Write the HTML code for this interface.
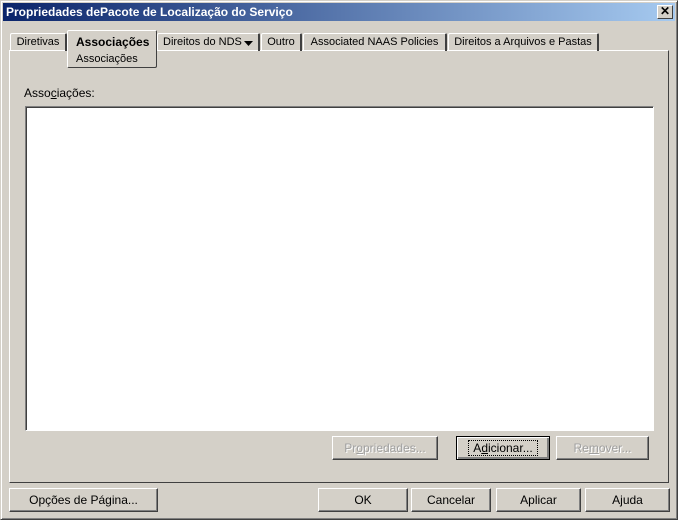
<!DOCTYPE html>
<html><head><style>
*{box-sizing:border-box}
body{margin:0;width:678px;height:520px;background:#d4d0c8;font-family:"Liberation Sans",sans-serif;font-size:11px;color:#000;position:relative;overflow:hidden}
.a{position:absolute;white-space:nowrap}
.win{left:0;top:0;width:678px;height:520px;border:1px solid;border-color:#d4d0c8 #404040 #404040 #d4d0c8;box-shadow:inset 1px 1px #fff,inset -1px -1px #808080}
.title{left:3px;top:3px;width:672px;height:18px;background:linear-gradient(90deg,#0a246a,#a6caf0);color:#fff;font-weight:bold;font-size:12px;line-height:18px;padding-left:3px}
.x{right:5px;top:5px;width:16px;height:14px;background:#d4d0c8;border:1px solid;border-color:#fff #404040 #404040 #fff;color:#000;font-size:12px;line-height:11px;text-align:center;font-weight:bold}
.tab{top:33px;height:18px;border-top:1px solid #fff;border-left:1px solid #fff;border-right:2px solid #404040;line-height:17px;text-align:center;border-radius:2px 2px 0 0}
.panel{left:9px;top:50px;width:660px;height:433px;border:1px solid;border-color:#fff #404040 #404040 #fff}
.list{left:25px;top:106px;width:629px;height:325px;background:#fff;border:1px solid;border-color:#808080 #fff #fff #808080;box-shadow:inset 1px 1px #404040}
.btn{height:24px;border:1px solid;border-color:#fff #404040 #404040 #fff;box-shadow:inset -1px -1px #808080;text-align:center;line-height:22px;font-size:12px}
.dis{color:#a0a0a0;text-shadow:1px 1px #fff}
u{text-decoration:underline}
</style></head><body>
<div class="a win"></div>
<div class="a title">Propriedades dePacote de Localização do Serviço</div>
<div class="a x">✕</div>
<div class="a panel"></div>
<div class="a tab" style="left:10px;width:57px">Diretivas</div>
<div class="a tab" style="left:157px;width:103px;text-align:left;padding-left:5px">Direitos do NDS</div>
<svg class="a" style="left:244px;top:41px" width="9" height="5"><path d="M0 0H9L4.5 5Z" fill="#000"/></svg>
<div class="a tab" style="left:261px;width:41px">Outro</div>
<div class="a tab" style="left:303px;width:144px">Associated NAAS Policies</div>
<div class="a tab" style="left:448px;width:151px">Direitos a Arquivos e Pastas</div>
<div class="a" style="left:67px;top:30px;width:90px;height:38px;background:#d4d0c8;border:1px solid;border-color:#fff #404040 #404040 #fff;border-radius:2px;padding-left:8px;line-height:16px">
<div style="font-weight:bold;font-size:12px;line-height:22px">Associações</div>
<div style="margin-top:-2px">Associações</div></div>
<div class="a" style="left:24px;top:86px;font-size:12px">Asso<u>c</u>iações:</div>
<div class="a list"></div>
<div class="a btn dis" style="left:332px;top:436px;width:106px">Pr<u>o</u>priedades...</div>
<div class="a btn" style="left:456px;top:436px;width:94px;border-color:#000;box-shadow:inset 1px 1px #fff,inset -2px -2px #808080"><span style="outline:1px dotted #000;padding:0 4px">A<u>d</u>icionar...</span></div>
<div class="a btn dis" style="left:556px;top:436px;width:93px">Re<u>m</u>over...</div>
<div class="a btn" style="left:9px;top:488px;width:149px">Opções de Pá<u>g</u>ina...</div>
<div class="a btn" style="left:318px;top:488px;width:90px">OK</div>
<div class="a btn" style="left:411px;top:488px;width:80px">Cancelar</div>
<div class="a btn" style="left:496px;top:488px;width:85px">Aplicar</div>
<div class="a btn" style="left:585px;top:488px;width:85px">A<u>j</u>uda</div>
</body></html>
